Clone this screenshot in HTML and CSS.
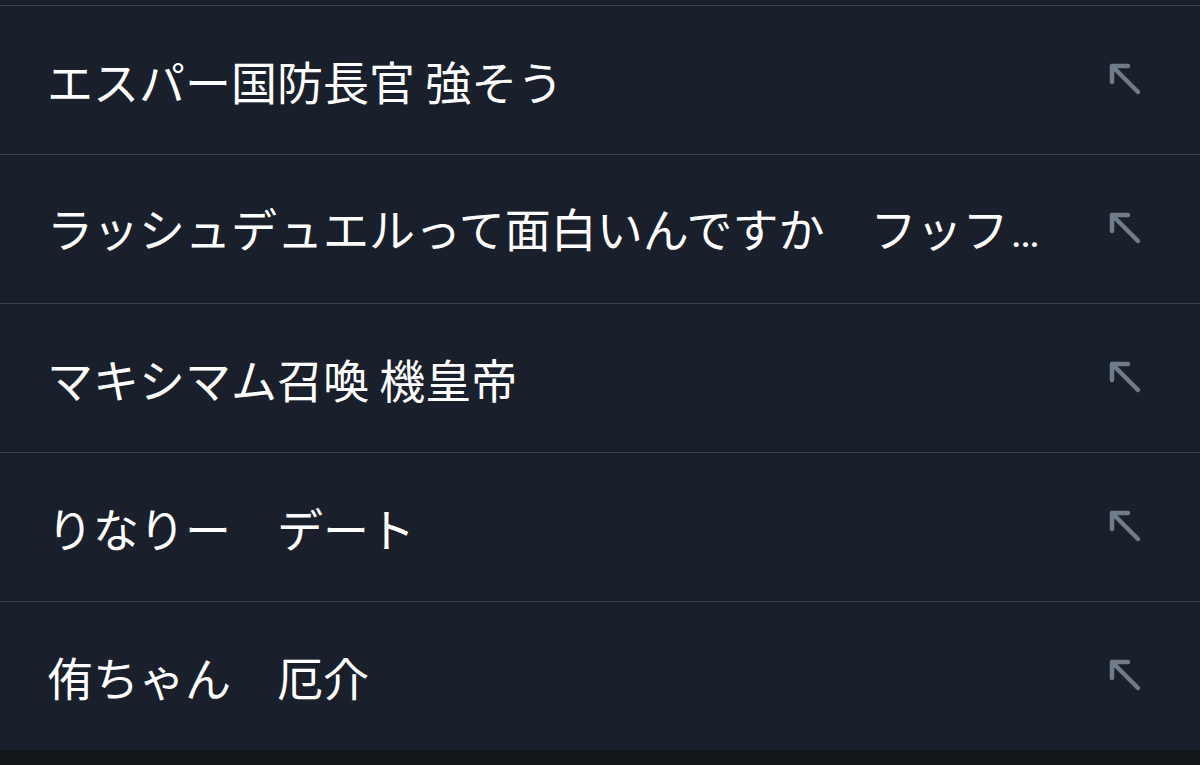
FILE: index.html
```html
<!DOCTYPE html>
<html lang="ja">
<head>
<meta charset="utf-8">
<link rel="stylesheet" href="styles.css">
</head>
<body>
<div class="list">
  <div class="row"><span class="text">エスパー国防長官 強そう</span><svg class="arrow" viewBox="0 0 36 36"><path d="M4 4 L30 30 M4 4 L20 4 M4 4 L4 20"/></svg></div>
  <div class="row"><span class="text">ラッシュデュエルって面白いんですか　フッフ<span class="ellipsis">…</span></span><svg class="arrow" viewBox="0 0 36 36"><path d="M4 4 L30 30 M4 4 L20 4 M4 4 L4 20"/></svg></div>
  <div class="row"><span class="text">マキシマム召喚 機皇帝</span><svg class="arrow" viewBox="0 0 36 36"><path d="M4 4 L30 30 M4 4 L20 4 M4 4 L4 20"/></svg></div>
  <div class="row"><span class="text">りなりー　デート</span><svg class="arrow" viewBox="0 0 36 36"><path d="M4 4 L30 30 M4 4 L20 4 M4 4 L4 20"/></svg></div>
  <div class="row last"><span class="text">侑ちゃん　厄介</span><svg class="arrow" viewBox="0 0 36 36"><path d="M4 4 L30 30 M4 4 L20 4 M4 4 L4 20"/></svg></div>
</div>
<div class="footer"></div>
</body>
</html>
```
FILE: styles.css
```css
html, body {
  margin: 0;
  padding: 0;
  background: #1a202b;
  height: 765px;
  overflow: hidden;
}
.list {
  padding-top: 5px;
}
.row {
  display: flex;
  align-items: center;
  height: 148px;
  border-top: 1px solid #38404b;
  padding: 0 56px 0 47px;
}
.text {
  flex: 1;
  color: #ffffff;
  font-family: "Noto Sans CJK JP", "Noto Sans", sans-serif;
  font-size: 46px;
  line-height: 1;
  white-space: nowrap;
}
.ellipsis {
  font-family: Roboto, "Noto Sans", sans-serif;
  font-size: 44px;
  margin-left: 2px;
}
.arrow {
  width: 36px;
  height: 36px;
  fill: none;
  stroke: #6f7c89;
  stroke-width: 4.5;
  stroke-linecap: round;
  stroke-linejoin: round;
}
.footer {
  height: 20px;
  background: #12171c;
}
```
